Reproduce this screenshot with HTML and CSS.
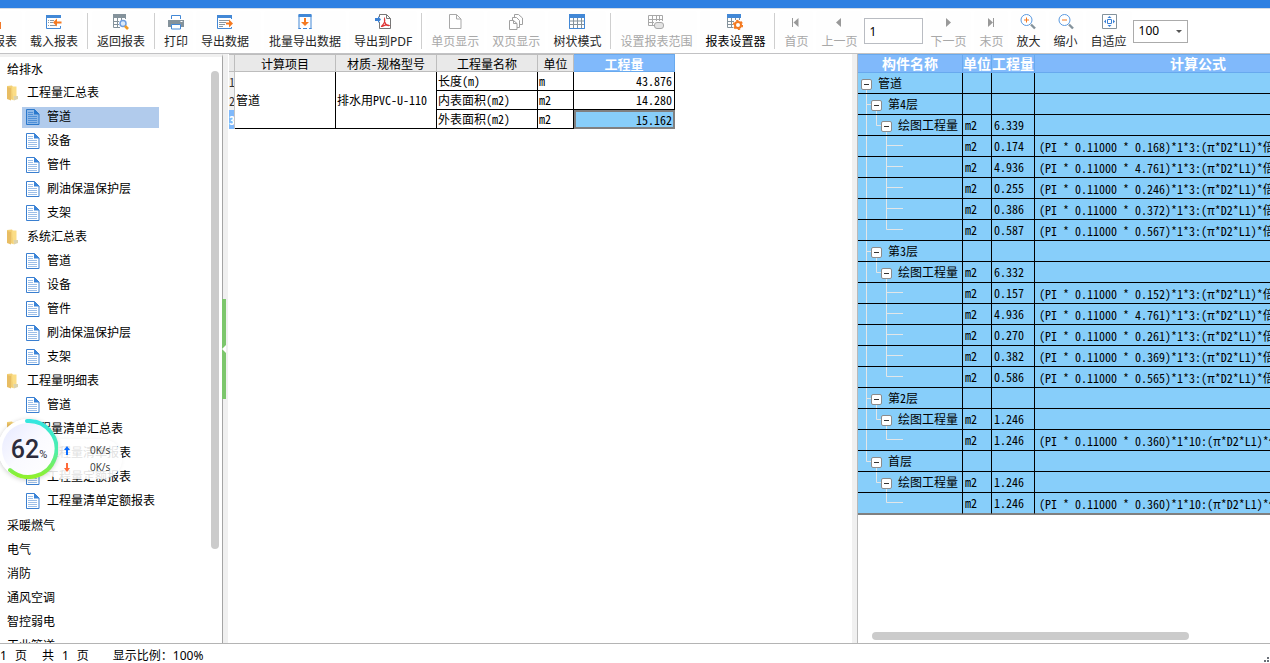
FILE: index.html
```html
<!DOCTYPE html>
<html lang="zh-CN">
<head>
<meta charset="utf-8">
<title>工程量报表</title>
<link rel="stylesheet" href="styles.css">
</head>
<body>
<svg class="defs" aria-hidden="true">
  <symbol id="doc" viewBox="0 0 14 16">
    <path d="M.5.5H8.5L13 5V15.500H.5Z" fill="#fff" stroke="#3a7fd0"/>
    <path d="M8 0L13.500 5.500H8Z" fill="#3a84d8"/>
    <path d="M2 3.500H7M2 5.500H7M2 7.500H11M2 9.500H11M2 11.500H11M2 13.500H11" stroke="#9dbfe8"/>
  </symbol>
  <symbol id="doc-sel" viewBox="0 0 14 16">
    <path d="M.5.5H8.5L13 5V15.500H.5Z" fill="#8fb9e8" stroke="#2a78cc"/>
    <path d="M8 0L13.500 5.500H8Z" fill="#2a78cc"/>
    <path d="M2 3.500H7M2 5.500H7M2 7.500H11M2 9.500H11M2 11.500H11M2 13.500H11" stroke="#4f90d8"/>
  </symbol>
  <symbol id="folder" viewBox="0 0 14 16">
    <path d="M1 1L6 .5L7 2V15L1 13Z" fill="#f2cf74"/>
    <path d="M6 1.500H10.500V13L7 15.500Z" fill="#fbdd86"/>
    <path d="M1 2L5 3V15.500L1 14Z" fill="#e8bd63"/>
    <path d="M7.500 11H12V14L8 15.500Z" fill="#dcd3ae"/>
  </symbol>
  <symbol id="g-root" viewBox="0 0 50 21"><path d="M8.500 10V21" class="guide"/></symbol>
  <symbol id="g-mid" viewBox="0 0 50 21"><path d="M8.500 0V21M8.500 10.500H14M18.500 10V21" class="guide"/></symbol>
  <symbol id="g-end" viewBox="0 0 50 21"><path d="M8.500 0V10.500H14M18.500 10V21" class="guide"/></symbol>
  <symbol id="g-sub" viewBox="0 0 50 21"><path d="M8.500 0V21M18.500 0V10.500H24M28.500 10V21" class="guide"/></symbol>
  <symbol id="g-subend" viewBox="0 0 50 21"><path d="M18.500 0V10.500H24M28.500 10V21" class="guide"/></symbol>
  <symbol id="g-leaf" viewBox="0 0 50 21"><path d="M8.500 0V21M28.500 0V21M28.500 9.500H45" class="guide"/></symbol>
  <symbol id="g-leaflast" viewBox="0 0 50 21"><path d="M8.500 0V21M28.500 0V9.500H45" class="guide"/></symbol>
  <symbol id="g-leafend" viewBox="0 0 50 21"><path d="M28.500 0V9.500H45" class="guide"/></symbol>
</svg>

<div class="titlebar"></div>
<header class="toolbar">
  <button class="tool first"><svg class="icon" viewBox="0 0 16 16"><path d="M3 8H4V15H3Z" fill="#f0782a"/></svg><span>报表</span></button>
  <button class="tool"><svg class="icon" viewBox="0 0 16 16"><path d="M.5 1V14.500H14.500V12M14.500 4V1" fill="none" stroke="#4288d6"/><path d="M0 1H15V4H0Z" fill="#4288d6"/><path d="M2 6.500H3M4 6.500H8M2 8.500H3M4 8.500H7M2 11.500H3M4 11.500H10" stroke="#8a98a2"/><path d="M7 8.500L11 4.500V7.500H15.500V9.500H11V12.500Z" fill="#f47920"/></svg><span>载入报表</span></button>
  <i class="sep"></i>
  <button class="tool"><svg class="icon" viewBox="0 0 16 16"><path d="M0 0H13V4H0Z" fill="#84929b"/><path d="M.5 0V13.500H7M4.500 3V13M8.500 3V6M12.500 3V5M0 7.500H6M0 10.500H6" fill="none" stroke="#84929b"/><circle cx="10" cy="9.500" r="3" fill="#dceafa" stroke="#6f9ee0" stroke-width="1.500"/><path d="M12 12L15 15" stroke="#f19a24" stroke-width="2.600"/></svg><span>返回报表</span></button>
  <i class="sep"></i>
  <button class="tool"><svg class="icon" viewBox="0 0 16 16"><path d="M3.500 5V1.500H12.500V5" fill="#fff" stroke="#4288d6"/><path d="M0 6H16V13H0Z" fill="#84929b"/><path d="M12.500 7.500H14.500" stroke="#fff"/><path d="M3.500 10.500H12.500V15H3.500Z" fill="#fff" stroke="#4288d6"/></svg><span>打印</span></button>
  <button class="tool roomy"><svg class="icon" viewBox="0 0 16 16"><path d="M.5 1V14.500H14.500V13M14.500 5V1" fill="none" stroke="#4288d6"/><path d="M0 1H15V4H0Z" fill="#4288d6"/><path d="M2 6.500H12M2 8.500H9M2 10.500H8M2 12.500H6" stroke="#8a98a2"/><path d="M16 9.500L12 5.500V8.500H9V10.500H12V13.500Z" fill="#f47920"/></svg><span>导出数据</span></button>
  <button class="tool"><svg class="icon" viewBox="0 0 16 16"><path d="M2 1V15M14 1V15" stroke="#4288d6"/><path d="M1.500 0H14.500V3H1.500Z" fill="#4288d6"/><path d="M1.500 14.500H4M6 14.500H10M12 14.500H14.500" stroke="#4288d6"/><path d="M7 4H9V8H12L8 12L4 8H7Z" fill="#f47920"/></svg><span>批量导出数据</span></button>
  <button class="tool"><svg class="icon" viewBox="0 0 16 16"><path d="M4.500 3V.5H11.500L15.500 4.500V14.500H4.500V8M11.500.5V4.500H15.500" fill="none" stroke="#777"/><path d="M0 4H3V2L6 5.500L3 9V7H0Z" fill="#3a80d4"/><path d="M9.500 5C11 9 6 12.500 6.500 12.500C8 12.500 11 9.500 14 11.500C11 12 9 8 9.500 5Z" fill="none" stroke="#df3535" stroke-width="1.200"/></svg><span>导出到PDF</span></button>
  <i class="sep"></i>
  <button class="tool" disabled><svg class="icon" viewBox="0 0 16 16"><path d="M2.500.5H9.500L14 5V14.500H2.500ZM9.500.5V5H14" fill="none" stroke="#a8a8a8"/></svg><span>单页显示</span></button>
  <button class="tool" disabled><svg class="icon" viewBox="0 0 16 16"><g fill="#fff" stroke="#a0a0a0"><path d="M6.500.5H10.500L14.500 4V10.500H6.500Z"/><path d="M4.500 3.500H8.500L11.500 6.500V13.500H4.500Z"/><path d="M1.500 6.500H5.500L9 9.500V15.500H1.500ZM5.500 6.500V9.500H9"/></g></svg><span>双页显示</span></button>
  <button class="tool"><svg class="icon" viewBox="0 0 16 16"><path d="M.5 3V14.500H15.500V3M4.500 3V14M8.500 3V14M12.500 3V14M1 7H15M1 10.500H15" fill="none" stroke="#84929b"/><path d="M0 0H16V4H0Z" fill="#4288d6"/><path d="M.5 3V14.500H15.500V3" fill="none" stroke="#4288d6"/></svg><span>树状模式</span></button>
  <i class="sep"></i>
  <button class="tool" disabled><svg class="icon" viewBox="0 0 16 16"><path d="M.5 1.500H14.500V7M.5 1.500V11.500H6M4.500 2V11M8.500 2V7M11.500 2V7M1 5.500H14M1 8.500H6" fill="none" stroke="#a8a8a8"/><rect x="6.500" y="8.500" width="9" height="6" rx="2.500" fill="#e4e4e4" stroke="#a8a8a8"/></svg><span>设置报表范围</span></button>
  <button class="tool strong"><svg class="icon" viewBox="0 0 16 16"><path d="M.5 3V13.500H6M4.500 3V13M8.500 3V6M12.500 3V6M1 7.500H7M1 10.500H6" fill="none" stroke="#84929b"/><path d="M0 0H14V4H0Z" fill="#4288d6"/><circle cx="11" cy="11" r="3" fill="#fff" stroke="#f47920" stroke-width="2"/><circle cx="11" cy="11" r="4.400" fill="none" stroke="#f47920" stroke-width="1.500" stroke-dasharray="2.300 2.300"/></svg><span>报表设置器</span></button>
  <i class="sep"></i>
  <button class="tool" disabled><svg class="icon" viewBox="0 0 16 16"><path d="M4.500 4V13" stroke="#999"/><path d="M10.500 4V13L5.500 8.500Z" fill="#999"/></svg><span>首页</span></button>
  <button class="tool" disabled><svg class="icon" viewBox="0 0 16 16"><path d="M10 4V13L5 8.500Z" fill="#999"/></svg><span>上一页</span></button>
  <input class="page-no" type="text" value="1" aria-label="页码">
  <button class="tool" disabled><svg class="icon" viewBox="0 0 16 16"><path d="M6 4V13L11 8.500Z" fill="#999"/></svg><span>下一页</span></button>
  <button class="tool" disabled><svg class="icon" viewBox="0 0 16 16"><path d="M10.500 4V13" stroke="#999"/><path d="M5 4V13L10 8.500Z" fill="#999"/></svg><span>末页</span></button>
  <button class="tool"><svg class="icon" viewBox="0 0 16 16"><circle cx="6.500" cy="6" r="5.500" fill="#fff" stroke="#5b9ae0"/><path d="M6.500 3.500V8.500M4 6H9" stroke="#f47920"/><path d="M11 10.500L15 14.500" stroke="#84929b" stroke-width="2.400"/></svg><span>放大</span></button>
  <button class="tool"><svg class="icon" viewBox="0 0 16 16"><circle cx="6.500" cy="6" r="5.500" fill="#fff" stroke="#5b9ae0"/><path d="M4 6H9" stroke="#f47920"/><path d="M11 10.500L15 14.500" stroke="#84929b" stroke-width="2.400"/></svg><span>缩小</span></button>
  <button class="tool"><svg class="icon" viewBox="0 0 16 16"><path d="M1.500.5H15.500V14.500H1.500Z" fill="#fff" stroke="#84929b"/><path d="M6.500 5.500H10.500V9.500H6.500Z" fill="none" stroke="#3a80d4"/><path d="M8.500 2L10.500 4H6.500ZM8.500 13L10.500 11H6.500ZM3 7.500L5 5.500V9.500ZM14 7.500L12 5.500V9.500Z" fill="#3a80d4"/></svg><span>自适应</span></button>
  <div class="zoom-box">
    <select class="zoom" aria-label="显示比例"><option>100</option></select>
    <svg class="caret" viewBox="0 0 6 4"><path d="M0 0H6L3 3Z" fill="#555"/></svg>
  </div>
</header>

<main class="panes">
  <nav class="sidebar" aria-label="报表目录">
    <ul class="tree">
      <li class="root">给排水</li>
      <li class="group"><svg class="glyph"><use href="#folder"/></svg>工程量汇总表</li>
      <li class="leaf selected"><span><svg class="glyph"><use href="#doc-sel"/></svg>管道</span></li>
      <li class="leaf"><span><svg class="glyph"><use href="#doc"/></svg>设备</span></li>
      <li class="leaf"><span><svg class="glyph"><use href="#doc"/></svg>管件</span></li>
      <li class="leaf"><span><svg class="glyph"><use href="#doc"/></svg>刷油保温保护层</span></li>
      <li class="leaf"><span><svg class="glyph"><use href="#doc"/></svg>支架</span></li>
      <li class="group"><svg class="glyph"><use href="#folder"/></svg>系统汇总表</li>
      <li class="leaf"><span><svg class="glyph"><use href="#doc"/></svg>管道</span></li>
      <li class="leaf"><span><svg class="glyph"><use href="#doc"/></svg>设备</span></li>
      <li class="leaf"><span><svg class="glyph"><use href="#doc"/></svg>管件</span></li>
      <li class="leaf"><span><svg class="glyph"><use href="#doc"/></svg>刷油保温保护层</span></li>
      <li class="leaf"><span><svg class="glyph"><use href="#doc"/></svg>支架</span></li>
      <li class="group"><svg class="glyph"><use href="#folder"/></svg>工程量明细表</li>
      <li class="leaf"><span><svg class="glyph"><use href="#doc"/></svg>管道</span></li>
      <li class="group"><svg class="glyph"><use href="#folder"/></svg>工程量清单汇总表</li>
      <li class="leaf"><span><svg class="glyph"><use href="#doc"/></svg>工程量清单报表</span></li>
      <li class="leaf"><span><svg class="glyph"><use href="#doc"/></svg>工程量定额报表</span></li>
      <li class="leaf"><span><svg class="glyph"><use href="#doc"/></svg>工程量清单定额报表</span></li>
      <li class="root">采暖燃气</li>
      <li class="root">电气</li>
      <li class="root">消防</li>
      <li class="root">通风空调</li>
      <li class="root">智控弱电</li>
      <li class="root">工业管道</li>
    </ul>
    <div class="vscroll"></div>
  </nav>
  <div class="splitter left-split"><svg class="handle" viewBox="0 0 4 100"><path d="M0 0H4V100H0Z" fill="#7cc66c"/><path d="M4 46V54L0 50Z" fill="#fff"/></svg></div>

  <section class="report">
    <table class="grid summary">
      <colgroup><col class="w-no"><col class="w-item"><col class="w-item"><col class="w-item"><col class="w-unit"><col class="w-item"></colgroup>
      <thead><tr><th></th><th>计算项目</th><th>材质-规格型号</th><th>工程量名称</th><th>单位</th><th class="active">工程量</th></tr></thead>
      <tbody>
        <tr><th>1</th><td rowspan="3">管道</td><td rowspan="3">排水用PVC-U-110</td><td>长度(m)</td><td>m</td><td class="num">43.876</td></tr>
        <tr><th>2</th><td>内表面积(m2)</td><td>m2</td><td class="num">14.280</td></tr>
        <tr><th class="active">3</th><td>外表面积(m2)</td><td>m2</td><td class="num current">15.162</td></tr>
      </tbody>
    </table>
  </section>
  <div class="splitter"></div>

  <section class="detail">
    <table class="grid formulas">
      <colgroup><col class="w-name"><col class="w-m"><col class="w-qty"><col class="w-formula"></colgroup>
      <thead><tr><th>构件名称</th><th>单位</th><th>工程量</th><th>计算公式</th></tr></thead>
      <tbody>
        <tr><td class="node l0"><svg class="guides"><use href="#g-root"/></svg><button class="toggle" aria-label="折叠"></button>管道</td><td></td><td></td><td></td></tr>
        <tr><td class="node l1"><svg class="guides"><use href="#g-mid"/></svg><button class="toggle" aria-label="折叠"></button>第4层</td><td></td><td></td><td></td></tr>
        <tr><td class="node l2"><svg class="guides"><use href="#g-sub"/></svg><button class="toggle" aria-label="折叠"></button>绘图工程量</td><td>m2</td><td>6.339</td><td></td></tr>
        <tr><td class="node"><svg class="guides"><use href="#g-leaf"/></svg></td><td>m2</td><td>0.174</td><td class="fx">(PI * 0.11000 * 0.168)*1*3:(π*D2*L1)*倍数</td></tr>
        <tr><td class="node"><svg class="guides"><use href="#g-leaf"/></svg></td><td>m2</td><td>4.936</td><td class="fx">(PI * 0.11000 * 4.761)*1*3:(π*D2*L1)*倍数</td></tr>
        <tr><td class="node"><svg class="guides"><use href="#g-leaf"/></svg></td><td>m2</td><td>0.255</td><td class="fx">(PI * 0.11000 * 0.246)*1*3:(π*D2*L1)*倍数</td></tr>
        <tr><td class="node"><svg class="guides"><use href="#g-leaf"/></svg></td><td>m2</td><td>0.386</td><td class="fx">(PI * 0.11000 * 0.372)*1*3:(π*D2*L1)*倍数</td></tr>
        <tr><td class="node"><svg class="guides"><use href="#g-leaflast"/></svg></td><td>m2</td><td>0.587</td><td class="fx">(PI * 0.11000 * 0.567)*1*3:(π*D2*L1)*倍数</td></tr>
        <tr><td class="node l1"><svg class="guides"><use href="#g-mid"/></svg><button class="toggle" aria-label="折叠"></button>第3层</td><td></td><td></td><td></td></tr>
        <tr><td class="node l2"><svg class="guides"><use href="#g-sub"/></svg><button class="toggle" aria-label="折叠"></button>绘图工程量</td><td>m2</td><td>6.332</td><td></td></tr>
        <tr><td class="node"><svg class="guides"><use href="#g-leaf"/></svg></td><td>m2</td><td>0.157</td><td class="fx">(PI * 0.11000 * 0.152)*1*3:(π*D2*L1)*倍数</td></tr>
        <tr><td class="node"><svg class="guides"><use href="#g-leaf"/></svg></td><td>m2</td><td>4.936</td><td class="fx">(PI * 0.11000 * 4.761)*1*3:(π*D2*L1)*倍数</td></tr>
        <tr><td class="node"><svg class="guides"><use href="#g-leaf"/></svg></td><td>m2</td><td>0.270</td><td class="fx">(PI * 0.11000 * 0.261)*1*3:(π*D2*L1)*倍数</td></tr>
        <tr><td class="node"><svg class="guides"><use href="#g-leaf"/></svg></td><td>m2</td><td>0.382</td><td class="fx">(PI * 0.11000 * 0.369)*1*3:(π*D2*L1)*倍数</td></tr>
        <tr><td class="node"><svg class="guides"><use href="#g-leaflast"/></svg></td><td>m2</td><td>0.586</td><td class="fx">(PI * 0.11000 * 0.565)*1*3:(π*D2*L1)*倍数</td></tr>
        <tr><td class="node l1"><svg class="guides"><use href="#g-mid"/></svg><button class="toggle" aria-label="折叠"></button>第2层</td><td></td><td></td><td></td></tr>
        <tr><td class="node l2"><svg class="guides"><use href="#g-sub"/></svg><button class="toggle" aria-label="折叠"></button>绘图工程量</td><td>m2</td><td>1.246</td><td></td></tr>
        <tr><td class="node"><svg class="guides"><use href="#g-leaflast"/></svg></td><td>m2</td><td>1.246</td><td class="fx">(PI * 0.11000 * 0.360)*1*10:(π*D2*L1)*倍数</td></tr>
        <tr><td class="node l1"><svg class="guides"><use href="#g-end"/></svg><button class="toggle" aria-label="折叠"></button>首层</td><td></td><td></td><td></td></tr>
        <tr><td class="node l2"><svg class="guides"><use href="#g-subend"/></svg><button class="toggle" aria-label="折叠"></button>绘图工程量</td><td>m2</td><td>1.246</td><td></td></tr>
        <tr><td class="node"><svg class="guides"><use href="#g-leafend"/></svg></td><td>m2</td><td>1.246</td><td class="fx">(PI * 0.11000 * 0.360)*1*10:(π*D2*L1)*倍数</td></tr>
      </tbody>
    </table>
    <div class="hscroll"></div>
  </section>
</main>

<footer class="status">
  <span>1</span><span class="page">页</span><span class="total">共</span><span class="count">1</span><span class="page">页</span><span class="ratio">显示比例：100%</span>
  <svg class="grip" viewBox="0 0 6 6"><path d="M0 3H2V5H0ZM3 3H5V5H3ZM3 0H5V2H3Z" fill="#6b7078"/></svg>
</footer>

<aside class="monitor">
  <div class="speeds">
    <svg viewBox="0 0 6 9"><path d="M3 0L6 4H4V9H2V4H0Z" fill="#0a6cff"/></svg><span>0K/s</span>
    <svg viewBox="0 0 6 9"><path d="M3 9L6 5H4V0H2V5H0Z" fill="#ff6a3a"/></svg><span>0K/s</span>
  </div>
  <div class="gauge">
    <svg class="ring" viewBox="0 0 60 60">
      <defs>
        <linearGradient id="ringfill" x1="0" y1="0" x2="0" y2="1"><stop offset="0" stop-color="#34e6e0"/><stop offset=".55" stop-color="#4fefa8"/><stop offset="1" stop-color="#90f02c"/></linearGradient>
        <linearGradient id="face" x1="0" y1="0" x2="1" y2="1"><stop offset="0" stop-color="#e6e9ff"/><stop offset=".5" stop-color="#fafaff"/><stop offset="1" stop-color="#fff"/></linearGradient>
      </defs>
      <circle cx="30" cy="30" r="30" fill="#fff"/>
      <circle cx="30" cy="30" r="26" fill="url(#face)"/>
      <path d="M29 2A28 28 0 1 1 12 51" fill="none" stroke="url(#ringfill)" stroke-width="4" stroke-linecap="round"/>
    </svg>
    <div class="value"><b>62</b><small>%</small></div>
  </div>
</aside>
</body>
</html>
```
FILE: styles.css
```css
* { box-sizing: border-box; }
html, body { height: 100%; }
body {
  margin: 0;
  display: flex;
  flex-direction: column;
  overflow: hidden;
  background: #fff;
  color: #000;
  font: 12px/18px "Noto Sans", "Noto Sans CJK SC", sans-serif;
}
button, input, select { font: inherit; color: inherit; }
.defs { position: absolute; width: 0; height: 0; }
.guide { fill: none; stroke: #e2e6e8; }

.titlebar { flex: none; height: 9px; background: #2e80e2; border-bottom: 1px solid #d4dce6; }

/* toolbar */
.toolbar {
  flex: none;
  display: flex;
  align-items: center;
  gap: 3px;
  height: 45px;
  border-bottom: 1px solid #c2c2c4;
  overflow: hidden;
}
.tool {
  flex: none;
  display: flex;
  flex-direction: column;
  align-items: center;
  height: 40px;
  padding: 3px 5px 0;
  gap: 3px;
  border: 0;
  border-radius: 3px;
  background: #fefefe;
  color: #262626;
  white-space: nowrap;
}
.tool:disabled { color: #a8a8a8; }
.tool.first { margin-left: -12px; }
.tool.roomy { padding-right: 12px; }
.tool.strong { color: #000; }
.icon { flex: none; width: 16px; height: 16px; }
.sep { flex: none; width: 1px; height: 36px; margin: 0 1px; background: #cfcfcf; }
.page-no {
  flex: none;
  width: 59px;
  height: 26px;
  margin: 0 -1px;
  padding: 0 4px;
  border: 1px solid #b9bcc2;
  background: #fff;
}
.zoom-box { position: relative; flex: none; margin-left: -2px; }
.zoom {
  display: block;
  appearance: none;
  width: 55px;
  height: 23px;
  padding: 0 5px;
  border: 1px solid #ababab;
  border-radius: 0;
  background: #fff;
}
.caret { position: absolute; right: 6px; top: 10px; width: 6px; height: 4px; pointer-events: none; }

/* panes */
.panes { flex: 1; display: flex; min-height: 0; border-bottom: 1px solid #b4b4b4; }
.sidebar {
  flex: none;
  display: flex;
  width: 223px;
  border-top: 3px solid #f0f0f0;
  border-right: 1px solid #a4a4a4;
  overflow: hidden;
}
.tree { flex: 1; margin: 0; padding: 0; list-style: none; }
.tree li { display: flex; align-items: center; height: 24px; white-space: nowrap; }
.tree .root { padding: 2px 0 0 7px; }
.group { padding-left: 6px; gap: 7px; }
.leaf { padding-left: 22px; }
.leaf span { display: flex; align-items: center; gap: 7px; width: 137px; height: 21px; padding-left: 4px; }
.selected span { background: #b1cbec; }
.glyph { flex: none; width: 14px; height: 16px; }
.vscroll { width: 8px; height: 478px; margin: 14px 3px 0 0; border-radius: 4px; background: #cbcbcb; }

.splitter { flex: none; width: 5px; background: #f0f0f0; }
.left-split { display: flex; align-items: center; }
.handle { width: 4px; height: 100px; margin-left: -1px; }

/* grids */
.grid {
  table-layout: fixed;
  border-collapse: separate;
  border-spacing: 0;
  font-family: "Noto Sans CJK SC", sans-serif;
  font-feature-settings: "hwid";
  line-height: 15px;
}
.grid th, .grid td { padding: 0; white-space: nowrap; overflow: hidden; }
.grid td { border: solid #000; border-width: 0 1px 1px 0; text-align: left; }
.grid th { font-weight: 400; }

.report { flex: 1; min-width: 0; padding-left: 1px; }
.summary { width: 446px; }
.summary thead th { height: 18px; background: #e9e9e9; border: solid #bdbdbd; border-width: 1px 1px 1px 0; }
.summary thead .active { background: #80b9fb; border-color: #68a9ee; color: #fff; font-size: 13px; font-weight: 700; }
.summary tbody th { height: 19px; background: #f0f0f0; border-right: 1px solid #c4c4c4; color: #333; }
.summary tbody .active { background: #80b9fb; color: #fff; font-weight: 700; }
.summary td { padding: 0 1px 1px; }
.summary .num { padding-right: 2px; text-align: right; }
.summary .current { border: 2px solid #808080; background: #87cefa; padding: 0 1px 0 0; }
.w-no { width: 6px; }
.w-item { width: 101px; }
.w-unit { width: 36px; }

.detail {
  flex: none;
  display: flex;
  flex-direction: column;
  justify-content: space-between;
  width: 413px;
  padding-bottom: 3px;
  border-left: 1px solid #b9b9b9;
  overflow: hidden;
}
.formulas { flex: none; width: 504px; border-bottom: 1px solid #808080; }
.formulas th { height: 19px; background: #80b9fb; border: solid #68a9ee; border-width: 1px 1px 1px 0; color: #fff; font-size: 14px; font-weight: 700; }
.formulas td { height: 21px; background: #87cefa; padding: 0 2px 2px; }
.formulas tr:last-child td { border-bottom-color: #808080; }
.formulas .fx { padding: 1px 0 0 4px; }
.formulas .node { position: relative; padding: 0 0 1px; }
.guides { position: absolute; left: 0; top: 0; width: 50px; height: 21px; }
.toggle {
  position: relative;
  width: 11px;
  height: 11px;
  margin: 0 6px 0 3px;
  padding: 0;
  border: 1px solid #8c8c8c;
  border-radius: 2px;
  background: linear-gradient(#333, #333) center / 5px 1px no-repeat #fff;
  vertical-align: -1px;
}
.l1 .toggle { margin-left: 13px; }
.l2 .toggle { margin-left: 23px; }
.w-name { width: 105px; }
.w-m { width: 29px; }
.w-qty { width: 43px; }
.w-formula { width: 327px; }
.hscroll { width: 317px; height: 8px; margin-left: 14px; border-radius: 4px; background: #cbcbcb; }

/* status bar */
.status { flex: none; display: flex; height: 19px; padding-top: 5px; line-height: 14px; position: relative; }
.page { margin-left: 8px; }
.total { margin-left: 15px; }
.count { margin-left: 8px; }
.ratio { margin-left: 24px; }
.grip { position: absolute; right: 0; bottom: 0; width: 6px; height: 6px; }

/* floating network monitor */
.monitor { position: absolute; left: -2px; top: 419px; display: flex; align-items: center; }
.speeds {
  order: 2;
  display: grid;
  grid-template-columns: 6px auto;
  align-items: center;
  justify-content: start;
  column-gap: 20px;
  width: 80px;
  height: 40px;
  margin: 20px 0 0 -16px;
  padding: 3px 0 3px 22px;
  border-radius: 20px;
  background: rgba(255, 255, 255, .88);
  box-shadow: 0 0 4px rgba(0, 0, 0, .05);
  color: #333;
  font: 10px/17px "Open Sans", sans-serif;
}
.speeds svg { width: 6px; height: 9px; }
.gauge { position: relative; z-index: 1; width: 60px; height: 60px; border-radius: 50%; box-shadow: 0 1px 5px rgba(0, 0, 0, .2); }
.ring { display: block; width: 60px; height: 60px; }
.value {
  position: absolute;
  inset: 0;
  display: flex;
  align-items: baseline;
  justify-content: center;
  padding: 1px 0 0 2px;
  color: #2c2c3c;
  font-family: Roboto, sans-serif;
  line-height: 60px;
}
.value b { font-size: 25px; font-weight: 500; }
.value small { font-size: 11px; }
```
